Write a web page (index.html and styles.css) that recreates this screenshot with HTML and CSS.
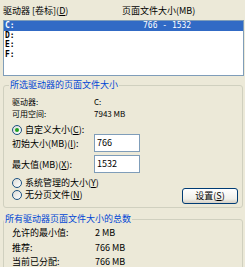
FILE: index.html
```html
<!DOCTYPE html>
<html lang="zh-CN">
<head>
    <meta charset="UTF-8">
    <title>虚拟内存</title>
    <link rel="stylesheet" href="styles.css">
</head>
<body>

    <div id="ventana">
        <div class="list-head">
            <span class="col-drive">驱动器 [卷标](<u>D</u>)</span>
            <span>页面文件大小(MB)</span>
        </div>

        <div class="list">
            <div class="row selected"><span class="cell-drive">C:</span><span>766 - 1532</span></div>
            <div class="row"><span class="cell-drive">D:</span><span></span></div>
            <div class="row"><span class="cell-drive">E:</span><span></span></div>
            <div class="row"><span class="cell-drive">F:</span><span></span></div>
        </div>

        <fieldset class="group group-sel">
            <legend>所选驱动器的页面文件大小</legend>

            <div class="info"><span class="label">驱动器:</span><span>C:</span></div>
            <div class="info"><span class="label">可用空间:</span><span>7943 MB</span></div>

            <div class="radio-row first"><span class="radio checked"></span><span>自定义大小(<u>C</u>):</span></div>

            <div class="field">
                <span class="label">初始大小(MB)(<u>I</u>):</span>
                <span class="input">766</span>
            </div>
            <div class="field">
                <span class="label">最大值(MB)(<u>X</u>):</span>
                <span class="input">1532</span>
            </div>

            <div class="bottom">
                <div class="radios">
                    <div class="radio-row"><span class="radio"></span><span>系统管理的大小(<u>Y</u>)</span></div>
                    <div class="radio-row"><span class="radio"></span><span>无分页文件(<u>N</u>)</span></div>
                </div>
                <button class="button">设置(<u>S</u>)</button>
            </div>
        </fieldset>

        <fieldset class="group group-total">
            <legend>所有驱动器页面文件大小的总数</legend>
            <div class="total"><span class="label">允许的最小值:</span><span>2 MB</span></div>
            <div class="total"><span class="label">推荐:</span><span>766 MB</span></div>
            <div class="total"><span class="label">当前已分配:</span><span>766 MB</span></div>
        </fieldset>
    </div>

</body>
</html>
```

FILE: styles.css
```css
        body {
            margin: 0;
            background-color: #ECE9D8;
            font-family: "Noto Sans CJK SC", sans-serif;
            font-size: 9px;
            color: #000;
            width: 245px;
            height: 267px;
            overflow: hidden;
        }
        u {
            text-decoration: underline;
        }
        #ventana {
            padding: 0 1px 0 3px;
        }
        .list-head {
            display: flex;
            height: 20px;
            padding-top: 6px;
            line-height: 10px;
            box-sizing: border-box;
        }
        .col-drive {
            width: 119px;
        }
        .list {
            border: 1px solid #7F9DB9;
            background-color: #fff;
            height: 54px;
        }
        .row {
            display: flex;
            height: 9.5px;
            line-height: 9.5px;
            font-family: "DejaVu Sans Mono", monospace;
            font-size: 8px;
        }
        .row.selected {
            background-color: #316AC5;
            color: #fff;
        }
        .cell-drive {
            width: 139px;
            padding-left: 1px;
            box-sizing: border-box;
            font-weight: bold;
        }
        .group {
            border: 1px solid #D0D0BF;
            border-radius: 3px;
            margin: 0 1px 0 0;
            min-width: 0;
        }
        .group legend {
            color: #0046D5;
            line-height: 10px;
            padding: 0 1px;
        }
        .group-sel {
            margin-top: 4px;
            padding: 6.4px 4px 3px 8px;
        }
        .group-sel legend {
            margin-left: -3px;
        }
        .group-total {
            margin-top: 6px;
            padding: 2px 4px 6px 4px;
        }
        .group-total legend {
            margin-left: -4px;
        }
        .info {
            display: flex;
            height: 11.6px;
            line-height: 11.6px;
            font-size: 8px;
        }
        .label {
            width: 82px;
            flex-shrink: 0;
        }
        .radio-row {
            display: flex;
            align-items: center;
            gap: 3px;
            height: 10px;
            line-height: 10px;
        }
        .radio-row.first {
            margin-top: 5.9px;
            height: 9px;
        }
        .radio {
            width: 8px;
            height: 8px;
            border: 1px solid #1C5180;
            border-radius: 50%;
            background: linear-gradient(135deg, #DCDCD7, #fff);
            display: flex;
            align-items: center;
            justify-content: center;
        }
        .radio.checked::after {
            content: "";
            width: 4px;
            height: 4px;
            border-radius: 50%;
            background-color: #21A121;
        }
        .field {
            display: flex;
            align-items: center;
            height: 18px;
        }
        .field + .field {
            margin-top: 3px;
        }
        .input {
            width: 46px;
            height: 18px;
            box-sizing: border-box;
            border: 1px solid #7F9DB9;
            background-color: #fff;
            padding: 2px 2px 0;
            line-height: 12px;
        }
        .bottom {
            display: flex;
            justify-content: space-between;
            margin-top: 5px;
            height: 26px;
        }
        .radios {
            display: flex;
            flex-direction: column;
            gap: 2px;
        }
        .button {
            align-self: flex-end;
            width: 56px;
            height: 16px;
            border: 1px solid #003C74;
            border-radius: 3px;
            background: linear-gradient(#FFFFFF, #F0F0EA 70%, #D6D0C5);
            font-family: inherit;
            font-size: 9px;
            line-height: 12px;
            padding: 0;
            color: #000;
        }
        .total {
            display: flex;
            height: 14.5px;
            line-height: 14.5px;
            padding-left: 4px;
        }
        .total .label {
            width: 83px;
        }
```
